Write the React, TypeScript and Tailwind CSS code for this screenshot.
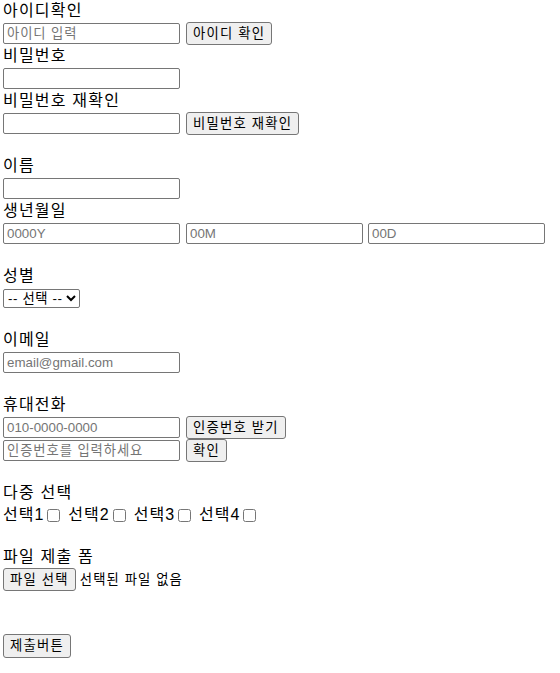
import React from "react";

const font = "font-['Liberation_Sans','Noto_Sans_CJK_KR',sans-serif]";
const inputCls =
  "h-[21px] w-[177px] border border-[#767676] rounded-[2px] bg-white px-[3px] text-[13.33px] leading-[17px] text-black outline-none placeholder:text-[#757575]";
const koPh = "tracking-[0.9px]";
const btnCls =
  "h-[23px] border border-[#767676] rounded-[3px] bg-[#efefef] px-[6px] text-[13.33px] leading-[17px] tracking-[1.2px] text-black";

function Label({ children }: { children: React.ReactNode }) {
  return <div className="h-[22px] text-[16px] leading-[22px] tracking-[1.2px] text-black">{children}</div>;
}

function Blank({ h = "h-[20px]" }: { h?: string }) {
  return <div className={h} />;
}

function Row({ children }: { children: React.ReactNode }) {
  return <div className="flex h-[23px] items-center gap-[6px]">{children}</div>;
}

export default function App() {
  return (
    <form className={`${font} bg-white pl-[3px] pr-[15px] pb-[16px] text-black`}>
      <Label>아이디확인</Label>
      <Row>
        <input className={`${inputCls} ${koPh}`} placeholder="아이디 입력" />
        <button type="button" className={btnCls}>아이디 확인</button>
      </Row>
      <Label>비밀번호</Label>
      <Row>
        <input type="password" className={inputCls} />
      </Row>
      <Label>비밀번호 재확인</Label>
      <Row>
        <input type="password" className={inputCls} />
        <button type="button" className={btnCls}>비밀번호 재확인</button>
      </Row>
      <Blank />
      <Label>이름</Label>
      <Row>
        <input className={inputCls} />
      </Row>
      <Label>생년월일</Label>
      <div className="flex h-[23px] items-center">
        <input className={inputCls} placeholder="0000Y" />
        <input className={`${inputCls} ml-[6px]`} placeholder="00M" />
        <input className={`${inputCls} ml-[5px]`} placeholder="00D" />
      </div>
      <Blank />
      <Label>성별</Label>
      <div className="flex h-[22px] items-center">
        <select className="h-[19px] w-[77px] border border-[#767676] rounded-[2px] bg-white text-[13.33px] leading-[15px] tracking-[0.6px] text-black">
          <option>-- 선택 --</option>
          <option>남자</option>
          <option>여자</option>
        </select>
      </div>
      <Blank />
      <Label>이메일</Label>
      <Row>
        <input type="email" className={inputCls} placeholder="email@gmail.com" />
      </Row>
      <Blank />
      <Label>휴대전화</Label>
      <Row>
        <input className={inputCls} placeholder="010-0000-0000" />
        <button type="button" className={btnCls}>인증번호 받기</button>
      </Row>
      <Row>
        <input className={`${inputCls} ${koPh}`} placeholder="인증번호를 입력하세요" />
        <button type="button" className={btnCls}>확인</button>
      </Row>
      <Blank />
      <Label>다중 선택</Label>
      <div className="flex h-[22px] items-center text-[16px] leading-[22px] tracking-[1px]">
        {["선택1", "선택2", "선택3", "선택4"].map((s, i) => (
          <label key={s} className={`flex items-center ${i > 0 ? "ml-[5px]" : ""}`}>
            {s}
            <input type="checkbox" className="m-[3px] h-[13px] w-[13px]" />
          </label>
        ))}
      </div>
      <Blank />
      <Label>파일 제출 폼</Label>
      <div className="flex h-[23px] items-center gap-[4px]">
        <button type="button" className={btnCls}>파일 선택</button>
        <span className="text-[13.33px] leading-[17px] tracking-[1.1px]">선택된 파일 없음</span>
      </div>
      <Blank h="h-[21px]" />
      <Blank h="h-[21px]" />
      <div className="flex h-[25px] items-center">
        <button type="submit" className={`${btnCls} h-[24px]`}>제출버튼</button>
      </div>
    </form>
  );
}
